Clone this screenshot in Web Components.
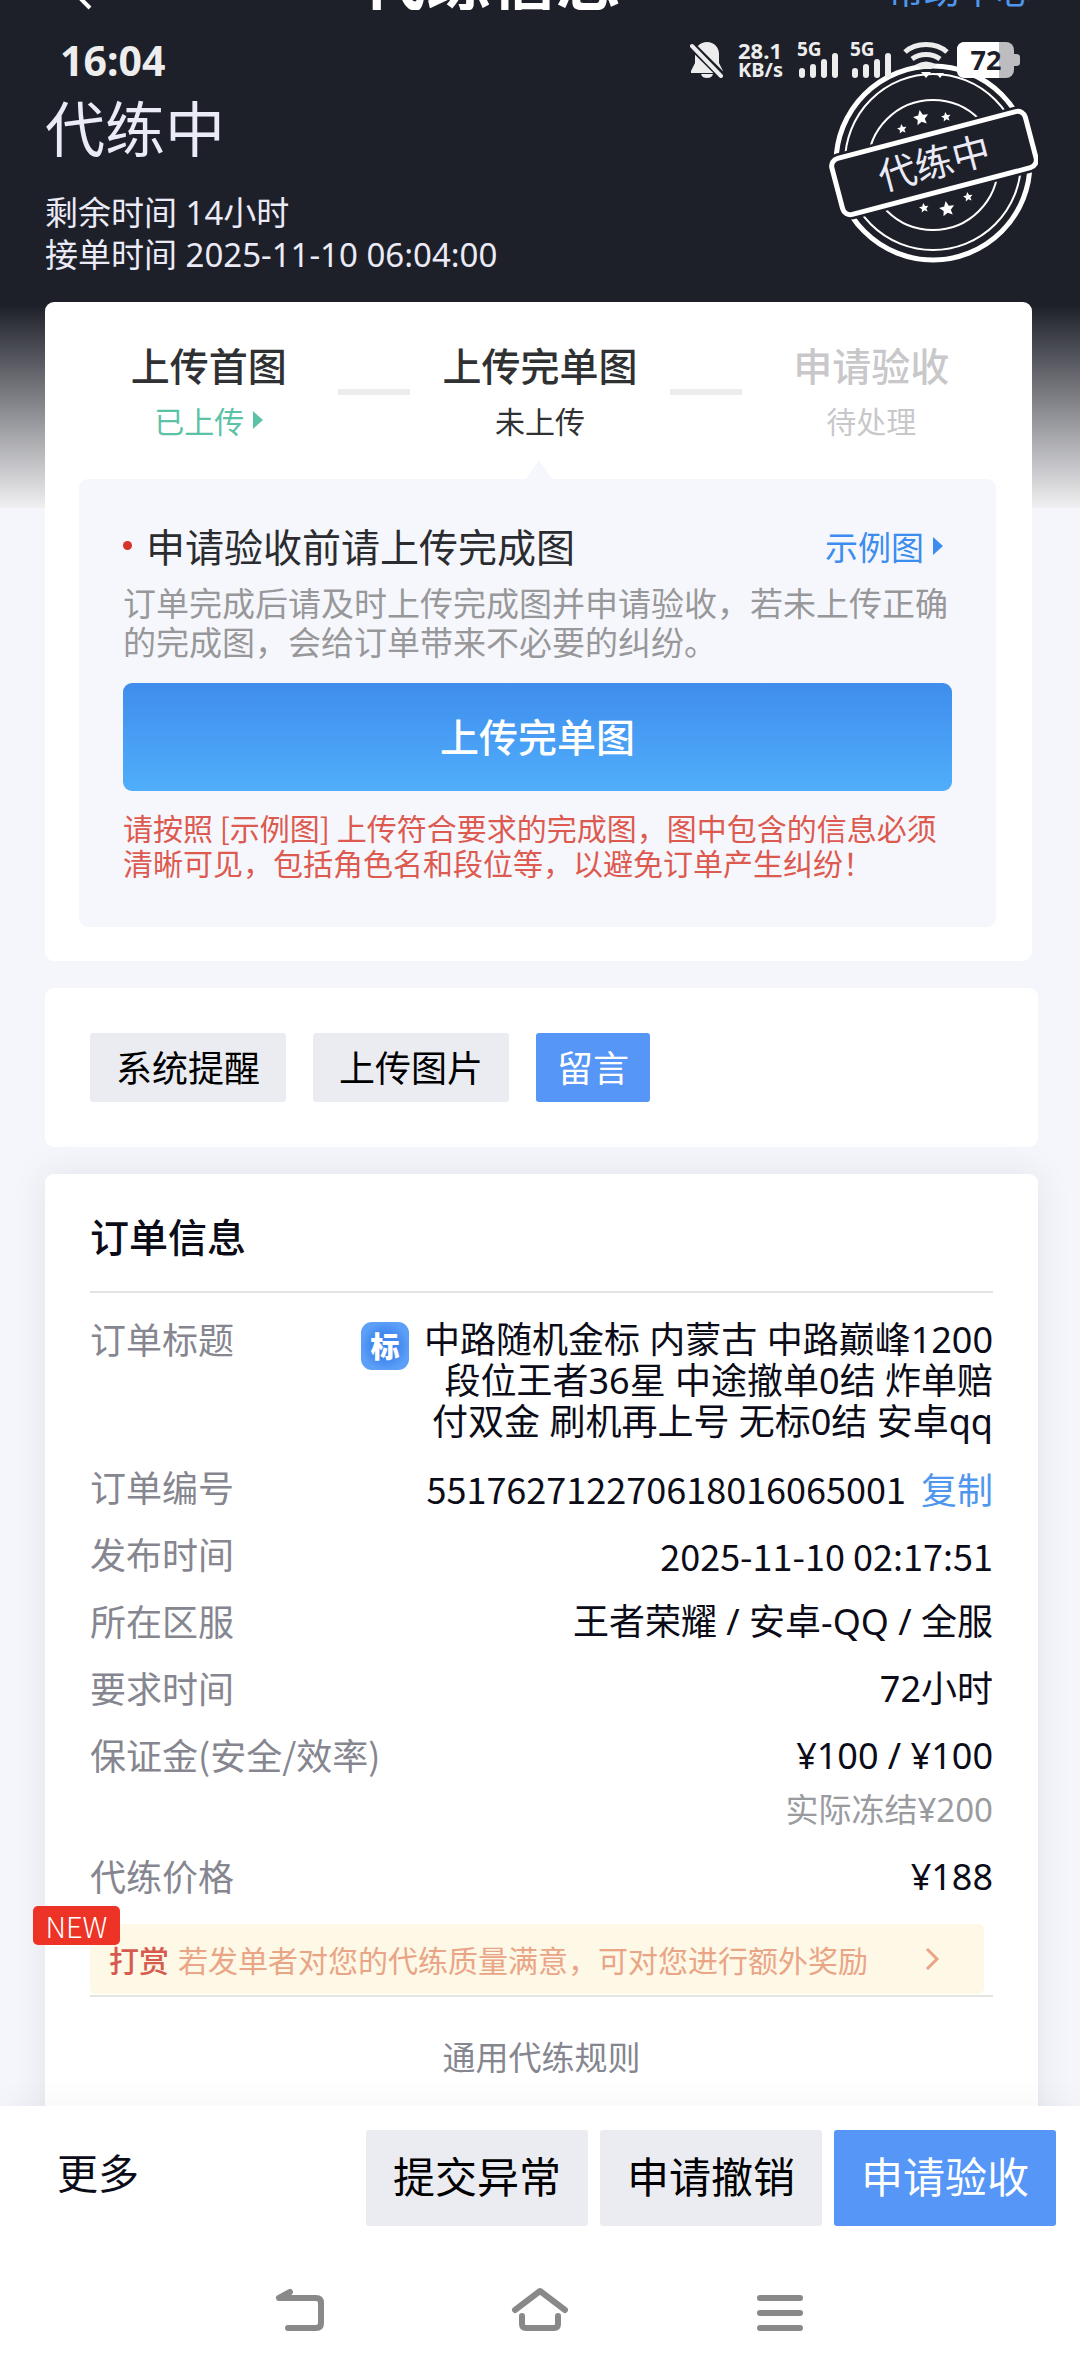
<!DOCTYPE html>
<html lang="zh-CN">
<head>
<meta charset="utf-8">
<meta name="viewport" content="width=device-width, initial-scale=1">
<title>代练信息</title>
<style>
  body {
    margin: 0;
    font-family: "Noto Sans CJK SC", "Noto Sans", sans-serif;
    color: #0b0c18;
    background: #f4f6fb;
    --dark: #1e2029;
    --blue: #5596f7;
    --grey: #ebecf2;
    --muted: #85868f;
    --latin: "Noto Sans", "Noto Sans CJK SC", sans-serif;
  }
</style>
</head>
<body>
<order-page></order-page>

<script>
const makeTemplate = (html) => {
  const template = document.createElement('template');
  template.innerHTML = html;
  return template;
};

const attach = (element, template) => {
  const root = element.attachShadow({ mode: 'open' });
  root.appendChild(template.content.cloneNode(true));
  return root;
};

// ---------- status bar ----------
const statusTemplate = makeTemplate(`
  <style>
    :host {
      position: relative;
      z-index: 2;
      display: flex;
      align-items: center;
      justify-content: space-between;
      padding: 20px 60px 0;
      color: #ededee;
      font-family: var(--latin);
      font-weight: 700;
    }
    time { font-size: 41px; line-height: 60px; }
    .icons { display: flex; align-items: center; }
    svg { display: block; height: 36px; }
    .bell { width: 34px; margin-right: 14px; }
    .speed { width: 44px; margin-right: 15px; text-align: center; }
    .speed span { display: block; font-size: 22px; line-height: 20px; }
    .speed span + span { font-size: 20px; }
    .signal { width: 42px; margin-right: 11px; }
    .wifi { width: 46px; margin-right: 8px; }
    .battery { width: 63px; }
  </style>
  <time>16:04</time>
  <div class="icons">
    <svg class="bell" viewBox="0 0 34 36" fill="#ededee">
      <path d="M17 0c-7 0-12 5-12 12v9L1 29v2h32v-2l-4-8v-9C29 5 24 0 17 0z"/>
      <path d="M11 32h12c-1 3-3 4-6 4s-5-1-6-4z"/>
      <path d="M0 2l33 33" stroke="#1e2029" stroke-width="8"/>
      <path d="M2 4l29 30" stroke="#ededee" stroke-width="4" stroke-linecap="round"/>
    </svg>
    <div class="speed"><span>28.1</span><span>KB/s</span></div>
    <svg class="signal" viewBox="0 0 42 36" fill="#ededee">
      <text x="0" y="14" font-size="19">5G</text>
      <rect x="2" y="26" width="6" height="10" rx="3"/>
      <rect x="13" y="22" width="6" height="14" rx="3"/>
      <rect x="24" y="17" width="6" height="19" rx="3"/>
      <rect x="35" y="11" width="6" height="25" rx="3"/>
    </svg>
    <svg class="signal" viewBox="0 0 42 36" fill="#ededee">
      <text x="0" y="14" font-size="19">5G</text>
      <rect x="2" y="26" width="6" height="10" rx="3"/>
      <rect x="13" y="22" width="6" height="14" rx="3"/>
      <rect x="24" y="17" width="6" height="19" rx="3"/>
      <rect x="35" y="11" width="6" height="25" rx="3"/>
    </svg>
    <svg class="wifi" viewBox="0 0 46 36" fill="none" stroke="#ededee" stroke-width="5">
      <path d="M2 10C13 0 33 0 44 10"/>
      <path d="M9 17c8-6 20-6 28 0"/>
      <path d="M12 23q11-7 22 0l-6 4H18z" fill="#ededee" stroke="none"/>
      <path d="M18 30h10l-5 6zM33 31h8l-4 5z" fill="#fff" stroke="none"/>
    </svg>
    <svg class="battery" viewBox="0 0 63 36">
      <rect width="57" height="36" rx="8" fill="#bdbdbf"/>
      <path d="M57 12h2q4 0 4 3v6q0 3-4 3h-2z" fill="#bdbdbf"/>
      <path d="M8 0h34v36H8q-8 0-8-8V8q0-8 8-8z" fill="#fff"/>
      <text x="29" y="28" font-size="27" fill="#1e2029" text-anchor="middle">72</text>
    </svg>
  </div>
`);

class StatusBar extends HTMLElement {
  constructor() {
    super();
    attach(this, statusTemplate);
  }
}
customElements.define('status-bar', StatusBar);

// ---------- round stamp ----------
const stampTemplate = makeTemplate(`
  <style>
    :host { display: block; width: 210px; height: 210px; }
    svg { display: block; width: 100%; height: 100%; }
  </style>
  <svg viewBox="0 0 210 210" fill="none" stroke="#fff">
    <defs>
      <path id="star" stroke="none" fill="#fff"
        d="M0-10 2.9-3.6 9.5-3.1 4.5 1.6 5.9 8.1 0 4.7-5.9 8.1-4.5 1.6-9.5-3.1-2.9-3.6z"/>
    </defs>
    <circle cx="105" cy="103" r="97" stroke-width="5"/>
    <circle cx="105" cy="102" r="88" stroke-width="2"/>
    <circle cx="105" cy="105" r="65" stroke-width="2"/>
    <use href="#star" transform="translate(74 69) rotate(-10) scale(.5)"/>
    <use href="#star" transform="translate(93 58) rotate(-10) scale(.8)"/>
    <use href="#star" transform="translate(118 57) rotate(-10) scale(.5)"/>
    <use href="#star" transform="translate(96 148) rotate(-10) scale(.5)"/>
    <use href="#star" transform="translate(119 149) rotate(-10) scale(.8)"/>
    <use href="#star" transform="translate(140 137) rotate(-10) scale(.5)"/>
    <g transform="translate(106 103) rotate(-14.7)">
      <rect x="-100" y="-29" width="200" height="58" rx="8" fill="#1e2029" stroke="#1e2029" stroke-width="10"/>
      <rect x="-100" y="-29" width="200" height="58" rx="8" fill="#1e2029" stroke-width="5"/>
      <text y="14" font-size="38" text-anchor="middle" fill="#ebebf7" stroke="none">代练中</text>
    </g>
  </svg>
`);

class StatusStamp extends HTMLElement {
  constructor() {
    super();
    attach(this, stampTemplate);
  }
}
customElements.define('status-stamp', StatusStamp);

// ---------- white card ----------
const cardTemplate = makeTemplate(`
  <style>
    :host {
      display: block;
      box-sizing: border-box;
      margin: 0 42px 27px 45px;
      padding: 45px;
      border-radius: 9px;
      background: #fff;
    }
    :host([raised]) { box-shadow: 0 0 36px rgba(40, 45, 80, .09); }
  </style>
  <slot></slot>
`);

class PageCard extends HTMLElement {
  constructor() {
    super();
    attach(this, cardTemplate);
  }
}
customElements.define('page-card', PageCard);

// ---------- one step of the progress ----------
const stepTemplate = makeTemplate(`
  <style>
    :host { display: block; text-align: center; color: #303133; white-space: nowrap; }
    :host([state="wait"]) { color: #c8c8ca; }
    b { display: block; font-size: 39px; line-height: 57px; font-weight: 500; }
    span { display: flex; justify-content: center; align-items: center; gap: 9px; font-size: 30px; line-height: 54px; }
    svg { display: none; width: 10px; height: 18px; }
    :host([state="done"]) span { color: #5cc2a5; }
    :host([state="done"]) svg { display: block; }
  </style>
  <b><slot></slot></b>
  <span><slot name="note"></slot><svg viewBox="0 0 10 18" fill="currentColor"><path d="M0 0l10 9-10 9z"/></svg></span>
`);

class ProgressStep extends HTMLElement {
  constructor() {
    super();
    attach(this, stepTemplate);
  }
}
customElements.define('progress-step', ProgressStep);

// ---------- flat button ----------
const buttonTemplate = makeTemplate(`
  <style>
    :host { display: block; }
    button {
      display: block;
      box-sizing: border-box;
      width: 100%;
      margin: 0;
      border: 0;
      border-radius: 3px;
      padding: 6px 26px 9px;
      font: inherit;
      font-size: 36px;
      line-height: 54px;
      color: #000;
      background: var(--grey);
      white-space: nowrap;
    }
    :host([kind="primary"]) button { padding-left: 21px; padding-right: 21px; color: #fff; background: var(--blue); }
    :host([size="big"]) button { padding: 15px 27px 21px; font-size: 42px; line-height: 60px; }
    :host([kind="upload"]) button {
      padding: 22px 24px 26px;
      border-radius: 9px;
      font-size: 39px;
      line-height: 60px;
      font-weight: 500;
      color: #fff;
      background: linear-gradient(#3f8dec, #50aefb);
    }
  </style>
  <button type="button"><slot></slot></button>
`);

class FlatButton extends HTMLElement {
  constructor() {
    super();
    attach(this, buttonTemplate);
  }
}
customElements.define('flat-button', FlatButton);

// ---------- upload panel ----------
const uploadTemplate = makeTemplate(`
  <style>
    :host {
      position: relative;
      display: block;
      padding: 38px 44px 47px;
      border-radius: 9px;
      background: #f6f7fc;
    }
    :host::before {
      content: '';
      position: absolute;
      left: 50%;
      top: -19px;
      margin-left: -12px;
      border: 13px solid transparent;
      border-top: 0;
      border-bottom: 19px solid #f6f7fc;
    }
    header { display: flex; align-items: center; justify-content: space-between; }
    h2 {
      display: flex;
      align-items: center;
      gap: 14px;
      margin: 0;
      font-size: 39px;
      line-height: 57px;
      font-weight: 400;
      color: #2b2c30;
    }
    h2::before { content: ''; width: 9px; height: 9px; border-radius: 50%; background: #d8332b; }
    a {
      display: flex;
      align-items: center;
      gap: 9px;
      margin-right: 9px;
      font-size: 33px;
      color: #3d8df0;
      text-decoration: none;
    }
    a svg { width: 10px; height: 18px; }
    p { margin: 0; }
    .hint { margin: 9px 0 22px; font-size: 33px; line-height: 39px; color: #98989a; }
    .warn { margin-top: 19px; font-size: 30px; line-height: 35px; color: #dd5a50; }
  </style>
  <header>
    <h2>申请验收前请上传完成图</h2>
    <a href="#example">示例图<svg viewBox="0 0 10 18" fill="currentColor"><path d="M0 0l10 9-10 9z"/></svg></a>
  </header>
  <p class="hint">订单完成后请及时上传完成图并申请验收，若未上传正确的完成图，会给订单带来不必要的纠纷。</p>
  <flat-button kind="upload">上传完单图</flat-button>
  <p class="warn">请按照 [示例图] 上传符合要求的完成图，图中包含的信息必须清晰可见，包括角色名和段位等，以避免订单产生纠纷！</p>
`);

class UploadPanel extends HTMLElement {
  constructor() {
    super();
    attach(this, uploadTemplate);
  }
}
customElements.define('upload-panel', UploadPanel);

// ---------- label and value ----------
const fieldTemplate = makeTemplate(`
  <style>
    :host {
      display: flex;
      align-items: flex-start;
      justify-content: space-between;
      font-size: 36px;
      line-height: 42px;
    }
    .label { flex: none; color: var(--muted); }
    .value { max-width: 70%; padding-top: 2px; text-align: right; font-family: var(--latin); }
    :host([digits]) .value { font-family: inherit; }
    ::slotted([slot="extra"]) { display: block; margin-top: 12px; font-size: 33px; color: #9a9b9f; }
  </style>
  <div class="label"></div>
  <div class="value"><slot></slot><slot name="extra"></slot></div>
`);

class OrderField extends HTMLElement {
  constructor() {
    super();
    const root = attach(this, fieldTemplate);
    this.$label = root.querySelector('.label');
  }

  connectedCallback() {
    this.$label.textContent = this.getAttribute('label');
  }
}
customElements.define('order-field', OrderField);

// ---------- reward strip ----------
const rewardTemplate = makeTemplate(`
  <style>
    :host { position: relative; display: block; margin: 3px 9px 0 0; }
    a {
      display: flex;
      align-items: center;
      height: 70px;
      padding: 0 44px 0 19px;
      border-radius: 6px;
      background: #fef8e6;
      color: #e9a586;
      font-size: 30px;
      line-height: 66px;
      white-space: nowrap;
      text-decoration: none;
    }
    b { margin-right: 9px; font-weight: 500; color: #d65a4e; }
    svg { width: 15px; height: 24px; margin-left: auto; }
    .badge {
      position: absolute;
      left: -57px;
      top: -18px;
      width: 87px;
      border-radius: 5px;
      background: #ec3326;
      color: #fff;
      font-size: 29px;
      line-height: 39px;
      text-align: center;
      font-weight: 300;
    }
  </style>
  <a href="#reward">
    <b>打赏</b>若发单者对您的代练质量满意，可对您进行额外奖励
    <svg viewBox="0 0 15 24" fill="none" stroke="currentColor" stroke-width="3"><path d="M2 2l10 10L2 22"/></svg>
  </a>
  <span class="badge">NEW</span>
`);

class RewardStrip extends HTMLElement {
  constructor() {
    super();
    attach(this, rewardTemplate);
  }
}
customElements.define('reward-strip', RewardStrip);

// ---------- order details ----------
const detailTemplate = makeTemplate(`
  <style>
    :host { display: block; }
    h2 { margin: 0; padding-bottom: 27px; border-bottom: 2px solid #e4e4e7; font-size: 39px; line-height: 57px; font-weight: 500; }
    .fields { display: flex; flex-direction: column; gap: 23px; padding: 24px 0 1px; border-bottom: 2px solid #e4e4e0; }
    .title { display: flex; align-items: flex-start; gap: 10px; line-height: 41px; }
    .title svg { flex: none; width: 48px; height: 48px; margin-top: 3px; }
    button { margin: 0 0 0 15px; border: 0; padding: 0; background: none; font: inherit; color: #4f97ee; }
    .rules { display: block; padding: 38px 0 45px; text-align: center; font-size: 33px; line-height: 42px; color: var(--muted); text-decoration: none; }
  </style>
  <h2>订单信息</h2>
  <div class="fields">
    <order-field label="订单标题">
      <div class="title">
        <svg viewBox="0 0 48 48">
          <defs>
            <radialGradient id="tile"><stop offset=".5" stop-color="#3f86ee"/><stop offset="1" stop-color="#5c9ff8"/></radialGradient>
          </defs>
          <rect width="48" height="48" rx="11" fill="url(#tile)"/>
          <text x="24" y="36" font-size="29" font-weight="900" fill="#fff" text-anchor="middle">标</text>
        </svg>
        <span>中路随机金标 内蒙古 中路巅峰1200段位王者36星 中途撤单0结 炸单赔付双金 刷机再上号 无标0结 安卓qq</span>
      </div>
    </order-field>
    <order-field label="订单编号" digits>551762712270618016065001<button type="button">复制</button></order-field>
    <order-field label="发布时间" digits>2025-11-10 02:17:51</order-field>
    <order-field label="所在区服">王者荣耀 / 安卓-QQ / 全服</order-field>
    <order-field label="要求时间">72小时</order-field>
    <order-field label="保证金(安全/效率)">¥100 / ¥100<span slot="extra">实际冻结¥200</span></order-field>
    <order-field label="代练价格">¥188</order-field>
    <reward-strip></reward-strip>
  </div>
  <a class="rules" href="#rules">通用代练规则</a>
`);

class OrderDetail extends HTMLElement {
  constructor() {
    super();
    attach(this, detailTemplate);
  }
}
customElements.define('order-detail', OrderDetail);

// ---------- bottom actions ----------
const actionTemplate = makeTemplate(`
  <style>
    :host {
      position: relative;
      display: flex;
      align-items: center;
      gap: 12px;
      padding: 24px 24px 18px 57px;
      background: #fff;
      box-shadow: 0 -3px 30px rgba(30, 32, 41, .04);
    }
    .more { margin: 0 auto 0 0; border: 0; padding: 0 0 15px; background: none; font: inherit; font-size: 41px; line-height: 60px; color: #0b0c18; }
  </style>
  <button class="more" type="button">更多</button>
  <flat-button size="big">提交异常</flat-button>
  <flat-button size="big">申请撤销</flat-button>
  <flat-button size="big" kind="primary">申请验收</flat-button>
`);

class ActionBar extends HTMLElement {
  constructor() {
    super();
    attach(this, actionTemplate);
  }
}
customElements.define('action-bar', ActionBar);

// ---------- system navigation ----------
const systemTemplate = makeTemplate(`
  <style>
    :host { position: relative; display: grid; grid-template-columns: repeat(3, 1fr); padding: 0 16.667%; background: #fff; }
    button { display: flex; justify-content: center; align-items: center; height: 132px; border: 0; padding: 0; background: none; }
    svg { width: 60px; height: 48px; }
  </style>
  <button type="button" aria-label="返回">
    <svg viewBox="0 0 60 48" fill="none" stroke="#898989" stroke-width="6" stroke-linecap="round" stroke-linejoin="round">
      <path d="M20 6L9 12h37q5 0 5 5v20q0 5-5 5H18"/>
    </svg>
  </button>
  <button type="button" aria-label="主页">
    <svg viewBox="0 0 60 48" fill="none" stroke="#898989" stroke-width="6" stroke-linecap="round" stroke-linejoin="round">
      <path d="M5 24L30 5l25 19M12 30v8q0 4 4 4h28q4 0 4-4v-8"/>
    </svg>
  </button>
  <button type="button" aria-label="最近任务">
    <svg viewBox="0 0 60 48" fill="none" stroke="#898989" stroke-width="6" stroke-linecap="round">
      <path d="M10 12h40M10 27h40M10 42h40"/>
    </svg>
  </button>
`);

class SystemNav extends HTMLElement {
  constructor() {
    super();
    attach(this, systemTemplate);
  }
}
customElements.define('system-nav', SystemNav);

// ---------- page ----------
const pageTemplate = makeTemplate(`
  <style>
    :host { display: flex; flex-direction: column; height: 100vh; }
    main { position: relative; flex: 1; min-height: 0; overflow-y: auto; scrollbar-width: none; }
    .scroll {
      background: linear-gradient(var(--dark) 305px, #f0f0f2 508px, #f4f6fb 508px);
    }
    /* the title row is mostly scrolled away under the top edge */
    nav {
      display: flex;
      align-items: flex-end;
      justify-content: space-between;
      height: 10px;
      overflow: hidden;
      padding: 0 48px 0 54px;
      color: #fff;
    }
    nav svg { flex: none; width: 40px; height: 50px; }
    nav h1 { margin: 0; font-size: 65px; line-height: 65px; font-weight: 700; }
    nav a { font-size: 36px; line-height: 44px; color: #4f97ee; text-decoration: none; }
    .stage { padding: 0 45px 26px; color: #ebebf7; }
    .stage h2 { margin: 0 0 30px; font-size: 60px; line-height: 72px; font-weight: 400; }
    .stage p { margin: 0; font-family: var(--latin); font-size: 33px; line-height: 42px; }
    status-stamp { position: absolute; top: 60px; right: 42px; }
    .progress { margin-right: 48px; padding: 34px 36px 34px 34px; }
    .steps { display: grid; grid-template-columns: 1fr 72px 1fr 72px 1fr; align-items: center; margin: 0 -5px 32px 0; }
    .steps i { height: 6px; background: #ededee; }
    .tabs { display: flex; gap: 27px; }
    .detail { padding-top: 33px; margin-bottom: 60px; }
  </style>
  <main>
    <div class="scroll">
      <nav>
        <svg viewBox="0 0 40 50" fill="none" stroke="#fff" stroke-width="4"><path d="M36 0L12 24l24 24"/></svg>
        <h1>代练信息</h1>
        <a href="#help">帮助中心</a>
      </nav>
      <status-bar></status-bar>
      <div class="stage">
        <h2>代练中</h2>
        <p>剩余时间 14小时</p>
        <p>接单时间 2025-11-10 06:04:00</p>
      </div>
      <status-stamp></status-stamp>
      <page-card class="progress">
        <div class="steps">
          <progress-step state="done">上传首图<span slot="note">已上传</span></progress-step>
          <i></i>
          <progress-step>上传完单图<span slot="note">未上传</span></progress-step>
          <i></i>
          <progress-step state="wait">申请验收<span slot="note">待处理</span></progress-step>
        </div>
        <upload-panel></upload-panel>
      </page-card>
      <page-card>
        <div class="tabs">
          <flat-button>系统提醒</flat-button>
          <flat-button>上传图片</flat-button>
          <flat-button kind="primary">留言</flat-button>
        </div>
      </page-card>
      <page-card class="detail" raised>
        <order-detail></order-detail>
      </page-card>
    </div>
  </main>
  <action-bar></action-bar>
  <system-nav></system-nav>
`);

class OrderPage extends HTMLElement {
  constructor() {
    super();
    attach(this, pageTemplate);
  }
}
customElements.define('order-page', OrderPage);
</script>
</body>
</html>
